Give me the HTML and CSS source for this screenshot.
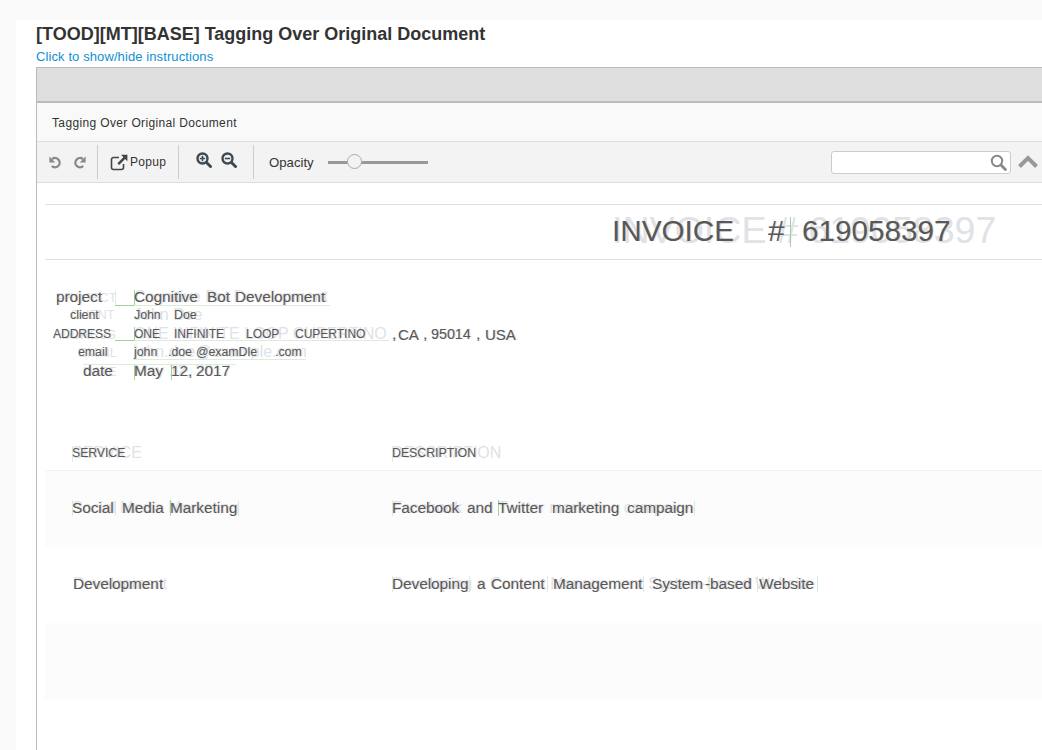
FILE: index.html
```html
<!DOCTYPE html>
<html lang="en">
<head>
    <meta charset="UTF-8">
    <title>[TOOD][MT][BASE] Tagging Over Original Document</title>
    <link rel="stylesheet" href="styles.css">
</head>
<body>
    <div class="panel">
        <h1 class="task-title">[TOOD][MT][BASE] Tagging Over Original Document</h1>
        <a class="task-link" href="#">Click to show/hide instructions</a>

        <div class="frame">
            <div class="frame-top"></div>
            <div class="doc-title">Tagging Over Original Document</div>

            <div class="toolbar">
                <div class="tool-group history">
                    <svg class="icon" width="13" height="13" viewBox="0 0 14 14"><path d="M3.400 3.200A5 5 0 1 1 3 10.800" fill="none" stroke="#888" stroke-width="2.500"/><path d="M0.400 0.600v6.400h6.400z" fill="#888"/></svg>
                    <svg class="icon" width="13" height="13" viewBox="0 0 14 14"><path d="M10.600 3.200A5 5 0 1 0 11 10.800" fill="none" stroke="#888" stroke-width="2.500"/><path d="M13.600 0.600v6.400H7.200z" fill="#888"/></svg>
                </div>
                <div class="tool-group popup">
                    <svg class="icon" width="18" height="17" viewBox="0 0 18 17"><path d="M9 3.500H3.500a2 2 0 0 0-2 2v8a2 2 0 0 0 2 2h8a2 2 0 0 0 2-2V10" fill="none" stroke="#444" stroke-width="1.600"/><path d="M11 .8h6.400v6.400l-2.300-2.300-6 6-1.700-1.700 6-6z" fill="#444"/></svg>
                    <span>Popup</span>
                </div>
                <div class="tool-group zoom">
                    <svg class="icon" width="16" height="16" viewBox="0 0 16 16"><circle cx="6.500" cy="6.500" r="5" fill="none" stroke="#3c4a55" stroke-width="2.400"/><path d="M10.500 10.500l4 4" stroke="#3c4a55" stroke-width="3" stroke-linecap="round"/><path d="M3.800 6.500h5.400M6.500 3.800v5.400" stroke="#3c4a55" stroke-width="1.600"/></svg>
                    <svg class="icon" width="16" height="16" viewBox="0 0 16 16"><circle cx="6.500" cy="6.500" r="5" fill="none" stroke="#3c4a55" stroke-width="2.400"/><path d="M10.500 10.500l4 4" stroke="#3c4a55" stroke-width="3" stroke-linecap="round"/><path d="M3.800 6.500h5.400" stroke="#3c4a55" stroke-width="1.600"/></svg>
                </div>
                <div class="tool-group opacity">
                    <span>Opacity</span>
                    <div class="slider"><div class="slider-thumb"></div></div>
                </div>
                <div class="tool-right">
                    <div class="search">
                        <svg class="icon" width="17" height="17" viewBox="0 0 17 17"><circle cx="7" cy="7" r="5.200" fill="none" stroke="#888" stroke-width="2"/><path d="M11 11l4.400 4.400" stroke="#888" stroke-width="2.800" stroke-linecap="round"/></svg>
                    </div>
                    <svg class="icon" width="22" height="14" viewBox="0 0 22 14"><path d="M2.500 11.500L11 3l8.500 8.500" fill="none" stroke="#999" stroke-width="4"/></svg>
                </div>
            </div>

            <div class="doc">
                <div class="doc-rule rule-top"></div>
                <div class="doc-rule rule-bottom"></div>
                <div class="table-head"></div>
                <div class="table-row shaded"></div>
                <div class="table-row"></div>
                <div class="table-row shaded"></div>
                <div id="canvas" class="canvas"></div>
            </div>
        </div>
    </div>

    <script src="tokens.js"></script>
</body>
</html>
```
FILE: styles.css
```css
html, body {
    height: 750px;
    overflow: hidden;
}

body {
    margin: 0;
    background-color: #fafafa;
    font-family: "Liberation Sans", Arial, sans-serif;
    color: #333;
}

.panel {
    margin: 20px 0 0 16px;
    width: 1026px;
    height: 730px;
    box-sizing: border-box;
    padding: 0 0 0 20px;
    background-color: #fff;
    overflow: hidden;
}

.task-title {
    margin: 0;
    padding-top: 4px;
    font-size: 18px;
    line-height: 21px;
    font-weight: bold;
    color: #333;
}

.task-link {
    display: block;
    margin-top: 2px;
    font-size: 13px;
    line-height: 20px;
    letter-spacing: 0.1px;
    color: #0e90d2;
    text-decoration: none;
}

.frame {
    border-left: 1px solid #bbb;
    border-top: 1px solid #bbb;
}

.frame-top {
    height: 33px;
    background-color: #dedede;
    border-bottom: 2px solid #bbb;
}

.doc-title {
    height: 38px;
    padding-left: 15px;
    line-height: 40px;
    font-size: 12px;
    letter-spacing: 0.36px;
    background-color: #f9f9f9;
    border-bottom: 1px solid #ddd;
    color: #333;
}

.toolbar {
    display: flex;
    align-items: center;
    height: 40px;
    background-color: #f3f3f3;
    border-bottom: 1px solid #ddd;
    font-size: 12px;
    color: #333;
}

.tool-group {
    display: flex;
    align-items: center;
    height: 34px;
    border-right: 1px solid #ccc;
}

.history {
    width: 61px;
    padding-left: 12px;
    box-sizing: border-box;
    gap: 11px;
}

.popup {
    width: 81px;
    padding-left: 12px;
    box-sizing: border-box;
    gap: 2px;
    letter-spacing: 0.3px;
}

.zoom {
    width: 75px;
    padding: 0 0 4px 17px;
    box-sizing: border-box;
    gap: 9px;
}

.opacity {
    border-right: none;
    padding-left: 15px;
    gap: 14px;
    font-size: 13.2px;
}

.slider {
    position: relative;
    width: 100px;
    height: 3px;
    background-color: #999;
}

.slider-thumb {
    position: absolute;
    left: 19px;
    top: -7px;
    width: 15px;
    height: 15px;
    box-sizing: border-box;
    border: 1px solid #aaa;
    border-radius: 50%;
    background-color: #f3f3f3;
}

.tool-right {
    display: flex;
    align-items: center;
    gap: 6px;
    margin-left: auto;
    padding-right: 3px;
}

.search {
    display: flex;
    align-items: center;
    justify-content: flex-end;
    width: 180px;
    height: 23px;
    box-sizing: border-box;
    padding-right: 3px;
    background-color: #fff;
    border: 1px solid #ccc;
    border-radius: 3px;
}

.icon {
    display: block;
    flex: none;
}

.doc {
    position: relative;
    height: 580px;
    padding: 21px 0 0 8px;
}

.doc-rule {
    height: 1px;
    background-color: #dfe0e4;
}

.rule-bottom {
    margin-top: 54px;
}

.table-head {
    height: 210px;
    border-bottom: 1px solid #f3f3f3;
}

.table-row {
    height: 76px;
}

.table-row.shaded:last-child, .table-row + .table-row + .shaded {
    height: 77px;
}

.shaded {
    background-color: #fcfcfc;
}

/* tagging canvas, coords are relative to the document */
.canvas {
    position: absolute;
    left: 0;
    top: 0;
    width: 100%;
    height: 580px;
}

.ghost, .tok {
    position: absolute;
    white-space: pre;
    line-height: 1;
}

.ghost {
    color: #dfe2e6;
}

.tok {
    color: #585858;
    text-shadow: 1px 0 1px #d5d8dc;
}

.mark {
    position: absolute;
    background-color: #9ed39e;
}

.mark.faint {
    background-color: #dcecdc;
}
```
FILE: tokens.js
```js
// page coords of the picture, the doc starts at 37,183
const originX = 37;
const originY = 183;

// x, center y, font size, text
const ghosts = [
    [612, 231, 37.6, 'INVOICE # 619058397'],
    [56, 297, 13, 'PROJECT'],
    [134, 297, 16, 'Cognitive Bot Development'],
    [70, 315, 12.5, 'CLIENT'],
    [134, 315, 16, 'John Doe'],
    [53, 334, 13, 'ADDRESS'],
    [134, 334, 16, 'ONE INFINITE LOOP CUPERTINO'],
    [392, 334, 15.300, ','], [398, 334, 15, 'CA'], [423, 334, 15.300, ','], [431, 334, 14.300, '95014'], [476, 334, 15.300, ','], [485, 334, 15, 'USA'],
    [78, 352, 13, 'EMAIL'],
    [134, 352, 16, 'john.doe@example.com'],
    [83, 371, 13, 'DATE'],
    [134, 371, 16, 'May 12, 2017'],
    [72, 453, 16, 'SERVICE'],
    [392, 453, 16, 'DESCRIPTION'],
    [72, 508, 16, 'Social Media Marketing'],
    [392, 508, 16, 'Facebook and Twitter marketing campaign'],
    [73, 584, 16, 'Development'],
    [392, 584, 16, 'Developing a Content Management System-based Website']
];

// x, center y, font size, text
const words = [
    [612, 231, 29.700, 'INVOICE'], [768, 231, 29.700, '#'], [802, 231, 29.700, '619058397'],
    [56, 297, 15.300, 'project'], [134, 297, 15.300, 'Cognitive'], [207, 297, 15.300, 'Bot'], [235, 297, 15.300, 'Development'],
    [70, 315, 12.300, 'client'], [134, 315, 12.300, 'John'], [174, 315, 12.300, 'Doe'],
    [53, 334, 12, 'ADDRESS'], [134, 334, 12, 'ONE'], [174, 334, 12, 'INFINITE'], [246, 334, 12, 'LOOP'], [295, 334, 12, 'CUPERTINO'],
    [392, 334, 15.300, ','], [398, 334, 15, 'CA'], [423, 334, 15.300, ','], [431, 334, 14.300, '95014'], [476, 334, 15.300, ','], [485, 334, 15, 'USA'],
    [78, 352, 12.300, 'email'], [134, 352, 12.300, 'john'], [168, 352, 12.300, '.doe'], [196, 352, 12.300, '@examDle'], [275, 352, 12.300, '.com'],
    [83, 371, 15.300, 'date'], [134, 371, 15.300, 'May'], [171, 371, 15.300, '12,'], [196, 371, 15.300, '2017'],
    [72, 453, 12.200, 'SERVICE'], [392, 453, 12.300, 'DESCRIPTION'],
    [72, 508, 15.300, 'Social'], [122, 508, 15.300, 'Media'], [170, 508, 15.300, 'Marketing'],
    [392, 508, 15.300, 'Facebook'], [467, 508, 15.300, 'and'], [498, 508, 15.300, 'Twitter'], [552, 508, 15.300, 'marketing'], [627, 508, 15.300, 'campaign'],
    [73, 584, 15.300, 'Development'],
    [392, 584, 15.300, 'Developing'], [477, 584, 15.300, 'a'], [491, 584, 15.300, 'Content'], [553, 584, 15.300, 'Management'], [652, 584, 15.300, 'System'], [705, 584, 15.300, '-based'], [759, 584, 15.300, 'Website']
];

// x, y, width, height, faint
const marks = [
    [790, 217, 1, 30],
    [134, 290, 1, 16], [115, 291, 1, 14, true], [115, 305, 19, 1], [134, 305, 196, 1, true],
    [134, 327, 1, 14], [115, 340, 19, 1], [134, 340, 255, 1, true],
    [134, 344, 1, 15, true], [134, 359, 172, 1, true],
    [134, 364, 1, 16], [171, 364, 1, 16], [83, 364, 153, 1, true],
    [72, 446, 1, 16, true],
    [72, 500, 1, 16, true], [115, 501, 1, 15, true], [170, 500, 1, 16], [238, 501, 1, 15, true],
    [392, 446, 1, 16, true],
    [392, 500, 1, 16, true], [498, 500, 1, 16], [694, 501, 1, 15, true],
    [392, 576, 1, 16, true], [469, 576, 1, 16, true], [547, 576, 1, 16, true], [643, 576, 1, 16, true], [709, 576, 1, 16, true], [757, 576, 1, 16, true], [817, 576, 1, 16, true]
];

const canvas = document.getElementById('canvas');

function addText(cls, x, y, size, text) {
    const el = document.createElement('span');
    el.className = cls;
    el.textContent = text;
    el.style.left = (x - originX) + 'px';
    el.style.top = (y - originY - size / 2) + 'px';
    el.style.fontSize = size + 'px';
    canvas.appendChild(el);
}

ghosts.forEach(g => addText('ghost', g[0], g[1], g[2], g[3]));

marks.forEach(m => {
    const el = document.createElement('div');
    el.className = m[4] ? 'mark faint' : 'mark';
    el.style.left = (m[0] - originX) + 'px';
    el.style.top = (m[1] - originY) + 'px';
    el.style.width = m[2] + 'px';
    el.style.height = m[3] + 'px';
    canvas.appendChild(el);
});

words.forEach(w => addText('tok', w[0], w[1], w[2], w[3]));
```
